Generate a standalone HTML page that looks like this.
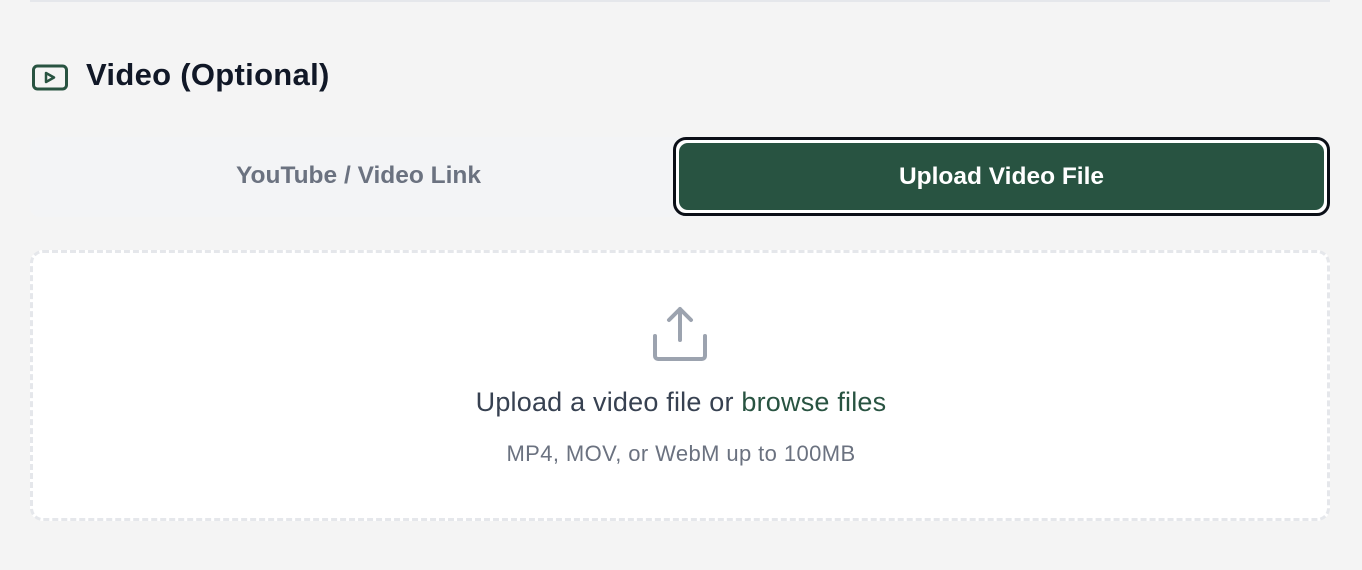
<!DOCTYPE html>
<html><head><style>
html,body{margin:0;padding:0;}
body{width:1362px;height:570px;background:#f4f4f4;position:relative;overflow:hidden;font-family:"Liberation Sans",sans-serif;}
.line{position:absolute;left:30px;top:0;width:1300px;height:2px;background:#e5e7eb;}
.title{position:absolute;left:86px;top:57px;font-size:31px;font-weight:bold;color:#111827;letter-spacing:0.3px;}
.icon{position:absolute;left:32px;top:64px;}
.tabs{position:absolute;left:30px;top:137px;width:1300px;height:80px;background:#f3f4f6;border-radius:10px;}
.tab1{position:absolute;left:30px;top:137px;width:657px;height:80px;line-height:78px;text-align:center;font-size:24.5px;font-weight:bold;color:#6b7280;}
.tab2{position:absolute;left:673px;top:137px;width:651px;height:73px;border:3px solid #0b0f17;border-radius:13px;background:#fff;box-sizing:content-box;}
.tab2 .in{position:absolute;left:3px;top:3px;right:3px;bottom:3px;background:#285341;border-radius:9px;color:#fff;text-align:center;line-height:67px;font-size:24.5px;font-weight:bold;}
.drop{position:absolute;left:30px;top:250px;width:1300px;height:271px;box-sizing:border-box;background:#fff;border:3px dashed #e5e7eb;border-radius:13px;}
.t1{position:absolute;left:0;width:1362px;top:387px;text-align:center;font-size:27px;letter-spacing:0.2px;color:#374151;}
.t1 span{color:#285341;}
.t2{position:absolute;left:0;width:1362px;top:441px;text-align:center;font-size:22px;letter-spacing:0.4px;color:#6b7280;}
</style></head><body>
<div class="line"></div>
<svg class="icon" width="36" height="28" viewBox="0 0 36 28"><rect x="1.5" y="2" width="33" height="23" rx="4" fill="none" stroke="#285341" stroke-width="3"/><path d="M14 9 L22 13.5 L14 18 Z" fill="none" stroke="#285341" stroke-width="2.5" stroke-linejoin="round"/></svg>
<div class="title">Video (Optional)</div>
<div class="tabs"></div>
<div class="tab1">YouTube / Video Link</div>
<div class="tab2"><div class="in">Upload Video File</div></div>
<div class="drop"></div>
<svg style="position:absolute;left:650px;top:304px" width="60" height="60" viewBox="0 0 60 60"><g fill="none" stroke="#9ca3af" stroke-width="4" stroke-linecap="round" stroke-linejoin="round"><path d="M30 36 V5 M19 16 L30 5 L41 16"/><path d="M5 32 V52 A3 3 0 0 0 8 55 H52 A3 3 0 0 0 55 52 V32"/></g></svg>
<div class="t1">Upload a video file or <span>browse files</span></div>
<div class="t2">MP4, MOV, or WebM up to 100MB</div>
</body></html>
